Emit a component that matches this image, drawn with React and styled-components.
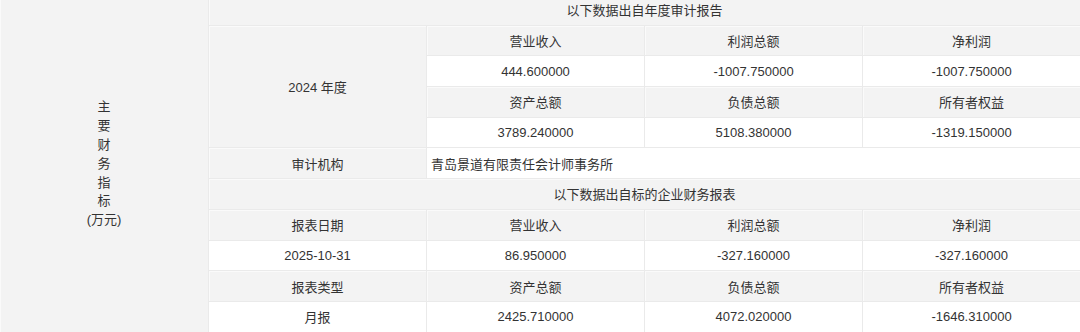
import React from "react";
import styled, { createGlobalStyle } from "styled-components";

const GlobalStyle = createGlobalStyle`
  html, body {
    margin: 0;
    padding: 0;
    background: #f3f3f3;
    overflow: hidden;
  }
`;

// Tabelle als Grid
const Table = styled.div`
  display: grid;
  grid-template-columns: 208px repeat(4, 1fr);
  grid-template-rows: repeat(11, 29.7px);
  gap: 1px;
  margin-top: -5px;
  width: 1080px;
  background: #eaeaea;
  font-family: "Liberation Sans", "Noto Sans CJK SC", sans-serif;
  font-size: 13px;
  color: #333;
`;

const Cell = styled.div`
  display: flex;
  align-items: center;
  justify-content: ${(p) => (p.$left ? "flex-start" : "center")};
  padding-left: ${(p) => (p.$left ? "4px" : "0")};
  background: ${(p) => (p.$white ? "#ffffff" : "#f3f3f3")};
  box-shadow: ${(p) =>
    p.$white ? "none" : "inset 1px 1px 0 #fafafa"};
  grid-column: ${(p) => p.$col || "auto"};
  grid-row: ${(p) => p.$row || "auto"};
  white-space: nowrap;
`;

const SideCell = styled(Cell)`
  flex-direction: column;
  line-height: 18.8px;
  padding-top: 2px;
`;

const SideChar = styled.span`
  display: block;
`;

const sideText = ["主", "要", "财", "务", "指", "标", "(万元)"];

// Zeilen aus dem Jahresprüfbericht
const auditRows = [
  { white: false, cells: ["营业收入", "利润总额", "净利润"] },
  { white: true, cells: ["444.600000", "-1007.750000", "-1007.750000"] },
  { white: false, cells: ["资产总额", "负债总额", "所有者权益"] },
  { white: true, cells: ["3789.240000", "5108.380000", "-1319.150000"] },
];

// Zeilen aus dem Finanzbericht
const reportRows = [
  { white: false, cells: ["报表日期", "营业收入", "利润总额", "净利润"] },
  { white: true, cells: ["2025-10-31", "86.950000", "-327.160000", "-327.160000"] },
  { white: false, cells: ["报表类型", "资产总额", "负债总额", "所有者权益"] },
  { white: true, cells: ["月报", "2425.710000", "4072.020000", "-1646.310000"] },
];

const App = () => {
  return (
    <>
      <GlobalStyle />
      <Table>
        <SideCell $col="1" $row="1 / -1">
          {sideText.map((c) => (
            <SideChar key={c}>{c}</SideChar>
          ))}
        </SideCell>

        <Cell $col="2 / 6" $row="1">以下数据出自年度审计报告</Cell>
        <Cell $col="2" $row="2 / 6">2024 年度</Cell>
        {auditRows.map((row, r) =>
          row.cells.map((text, i) => (
            <Cell key={`a${r}-${i}`} $white={row.white} $col={`${i + 3}`} $row={`${r + 2}`}>
              {text}
            </Cell>
          ))
        )}

        <Cell $col="2" $row="6">审计机构</Cell>
        <Cell $white $left $col="3 / 6" $row="6">青岛景道有限责任会计师事务所</Cell>

        <Cell $col="2 / 6" $row="7">以下数据出自标的企业财务报表</Cell>
        {reportRows.map((row, r) =>
          row.cells.map((text, i) => (
            <Cell key={`b${r}-${i}`} $white={row.white} $col={`${i + 2}`} $row={`${r + 8}`}>
              {text}
            </Cell>
          ))
        )}
      </Table>
    </>
  );
};

export default App;
